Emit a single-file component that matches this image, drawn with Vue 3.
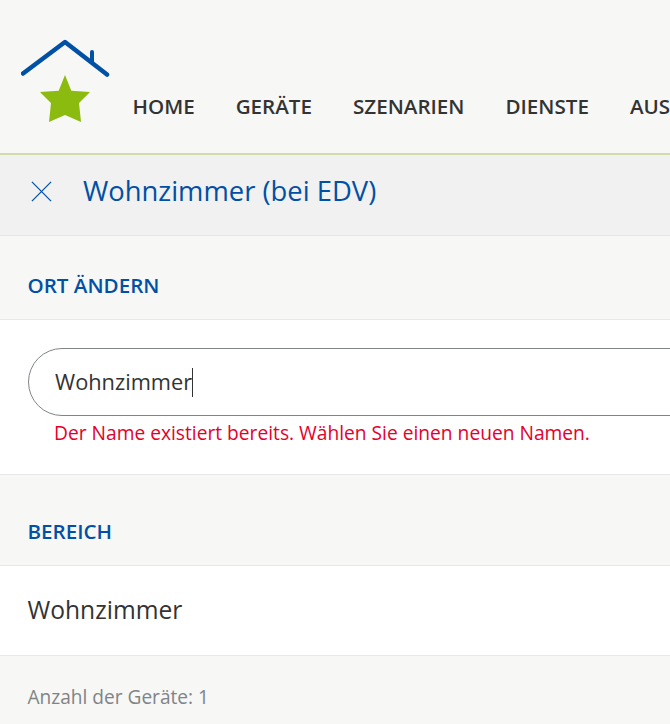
<template>
  <div class="page">
    <header class="top">
      <svg class="logo" width="90" height="90" viewBox="21 36 90 90">
        <path class="roof" d="M23 73.500 L65 42 L107 74.500" />
        <path class="roof chimney" d="M92 52 L92 62" />
        <polygon class="star" points="65,75 71.300,90.700 90,92 79,103 81,122 65,115 49,122 51,103 40,92 58.700,90.700" />
      </svg>
      <nav class="nav">
        <span>HOME</span>
        <span>GERÄTE</span>
        <span>SZENARIEN</span>
        <span>DIENSTE</span>
        <span>AUSWERTUNG</span>
      </nav>
    </header>
    <div class="titlebar">
      <svg class="close" width="24" height="24" viewBox="0 0 24 24">
        <path d="M2 2 L22 22 M22 2 L2 22" />
      </svg>
      <h1>Wohnzimmer (bei EDV)</h1>
    </div>
    <div class="section"><h2>ORT ÄNDERN</h2></div>
    <div class="card">
      <div class="field">
        <span class="value">Wohnzimmer</span><span class="caret"></span>
      </div>
      <p class="error">Der Name existiert bereits. Wählen Sie einen neuen Namen.</p>
    </div>
    <div class="section second"><h2>BEREICH</h2></div>
    <div class="row"><span>Wohnzimmer</span></div>
    <div class="count">Anzahl der Geräte: 1</div>
  </div>
</template>

<script setup>
</script>

<style>
html, body { margin: 0; background: #f7f7f5; overflow: hidden; }
</style>

<style scoped>
.page {
  width: 670px;
  height: 724px;
  overflow: hidden;
  background: #f7f7f5;
  font-family: "Open Sans", "Noto Sans", sans-serif;
  color: #333;
}
.top {
  height: 153px;
  display: flex;
  border-bottom: 2px solid #cfdcaa;
  position: relative;
}
.logo { position: absolute; left: 21px; top: 36px; }
.roof { fill: none; stroke: #0050a5; stroke-width: 4.500; stroke-linecap: round; stroke-linejoin: round; }
.chimney { stroke-width: 4; }
.star { fill: #8cbb10; }
.nav {
  display: flex;
  gap: 41px;
  margin: 93px 0 0 132.500px;
  font-size: 20.600px;
  font-weight: 600;
  line-height: 27px;
  white-space: nowrap;
  color: #333;
}
.titlebar {
  height: 72px;
  display: flex;
  align-items: center;
  background: #f1f1f1;
  border-bottom: 1px solid #e6e6e6;
  padding: 0 0 8px 30px;
}
.close { width: 23px; height: 23px; margin-right: 30px; }
.close path { fill: none; stroke: #0050a5; stroke-width: 1.300; }
.titlebar h1 {
  margin: 0;
  font-size: 27.400px;
  font-weight: 400;
  color: #0050a5;
  line-height: 36px;
  white-space: nowrap;
}
.section {
  height: 63px;
  display: flex;
  align-items: flex-end;
  padding: 0 0 20px 27.500px;
  border-bottom: 1px solid #e8e8e8;
}
.section h2 {
  margin: 0;
  font-size: 20.600px;
  font-weight: 600;
  color: #0050a5;
  line-height: 27px;
}
.second { height: 70px; }
.card {
  height: 155px;
  box-sizing: border-box;
  background: #fff;
  border-bottom: 1px solid #e8e8e8;
  padding: 28px 0 0 28px;
}
.field {
  box-sizing: border-box;
  width: 700px;
  height: 68px;
  border: 1px solid #808488;
  border-radius: 34px;
  display: flex;
  align-items: center;
  padding-left: 26px;
  font-size: 21.800px;
  color: #333;
}
.value { margin-top: -2px; }
.caret { width: 1px; height: 29px; background: #333; }
.error {
  margin: 4px 0 0 26px;
  font-size: 19.200px;
  line-height: 26px;
  color: #e4002b;
  white-space: nowrap;
}
.row {
  height: 89px;
  display: flex;
  align-items: center;
  padding-left: 27.500px;
  background: #fff;
  border-bottom: 1px solid #e8e8e8;
  font-size: 24.600px;
}
.row span { margin-top: -2px; }
.count {
  padding: 28px 0 0 27.500px;
  font-size: 19.100px;
  line-height: 26px;
  color: #808488;
}
</style>
